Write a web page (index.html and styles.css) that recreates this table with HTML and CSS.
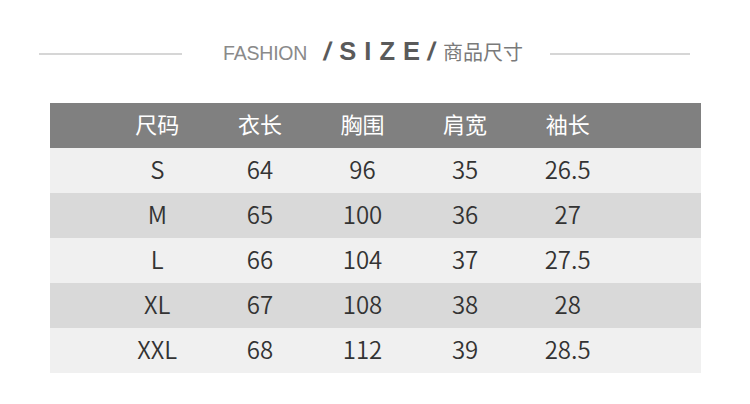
FILE: index.html
```html
<!DOCTYPE html>
<html lang="zh">
<head>
<meta charset="utf-8">
<link rel="stylesheet" href="styles.css">
</head>
<body>
<div class="page">
  <div class="title">
    <span class="line line-left"></span>
    <span class="fashion">FASHION</span>
    <span class="size"><span class="slash">/</span>SIZE<span class="slash">/</span></span>
    <span class="cn">商品尺寸</span>
    <span class="line line-right"></span>
  </div>
  <div class="table">
    <div class="row head"><span>尺码</span><span>衣长</span><span>胸围</span><span>肩宽</span><span>袖长</span></div>
    <div class="row light"><span>S</span><span>64</span><span>96</span><span>35</span><span>26.5</span></div>
    <div class="row dark"><span>M</span><span>65</span><span>100</span><span>36</span><span>27</span></div>
    <div class="row light"><span>L</span><span>66</span><span>104</span><span>37</span><span>27.5</span></div>
    <div class="row dark"><span>XL</span><span>67</span><span>108</span><span>38</span><span>28</span></div>
    <div class="row light"><span>XXL</span><span>68</span><span>112</span><span>39</span><span>28.5</span></div>
  </div>
</div>
</body>
</html>
```

FILE: styles.css
```css
html, body {
  margin: 0;
  padding: 0;
  background: #ffffff;
}
.page {
  width: 750px;
  height: 404px;
  padding-top: 37px;
  box-sizing: border-box;
}
.title {
  display: flex;
  align-items: baseline;
  height: 30px;
  padding-left: 39px;
}
.line {
  display: block;
  align-self: flex-start;
  height: 2px;
  background: #d6d6d6;
  margin-top: 16px;
}
.line-left { width: 143px; margin-right: 41px; }
.line-right { width: 140px; margin-left: 27px; }
.fashion {
  font-family: "Liberation Sans", Arial, sans-serif;
  font-size: 19.5px;
  color: #8a8a8a;
  letter-spacing: -0.2px;
  margin-right: 17px;
}
.size {
  font-family: "Liberation Sans", Arial, sans-serif;
  font-weight: bold;
  font-size: 25.5px;
  color: #5a5a5a;
  letter-spacing: 8px;
}
.slash {
  display: inline-block;
  transform: skewX(-10deg);
}
.cn {
  font-family: "Noto Sans CJK SC", sans-serif;
  font-size: 20px;
  color: #7a7a7a;
}
.table {
  margin-top: 36px;
  margin-left: 50px;
  width: 651px;
}
.row {
  display: grid;
  grid-template-columns: repeat(5, 102.6px);
  padding-left: 56px;
  padding-bottom: 5px;
  box-sizing: border-box;
  height: 45px;
  align-items: center;
  font-family: "Noto Sans CJK SC", sans-serif;
  font-weight: 350;
  font-size: 24px;
  color: #333333;
}
.row span {
  text-align: center;
}
.head {
  background: #808080;
  color: #ffffff;
  font-weight: 400;
  font-size: 22px;
}
.light { background: #f0f0f0; }
.dark { background: #d9d9d9; }
```
